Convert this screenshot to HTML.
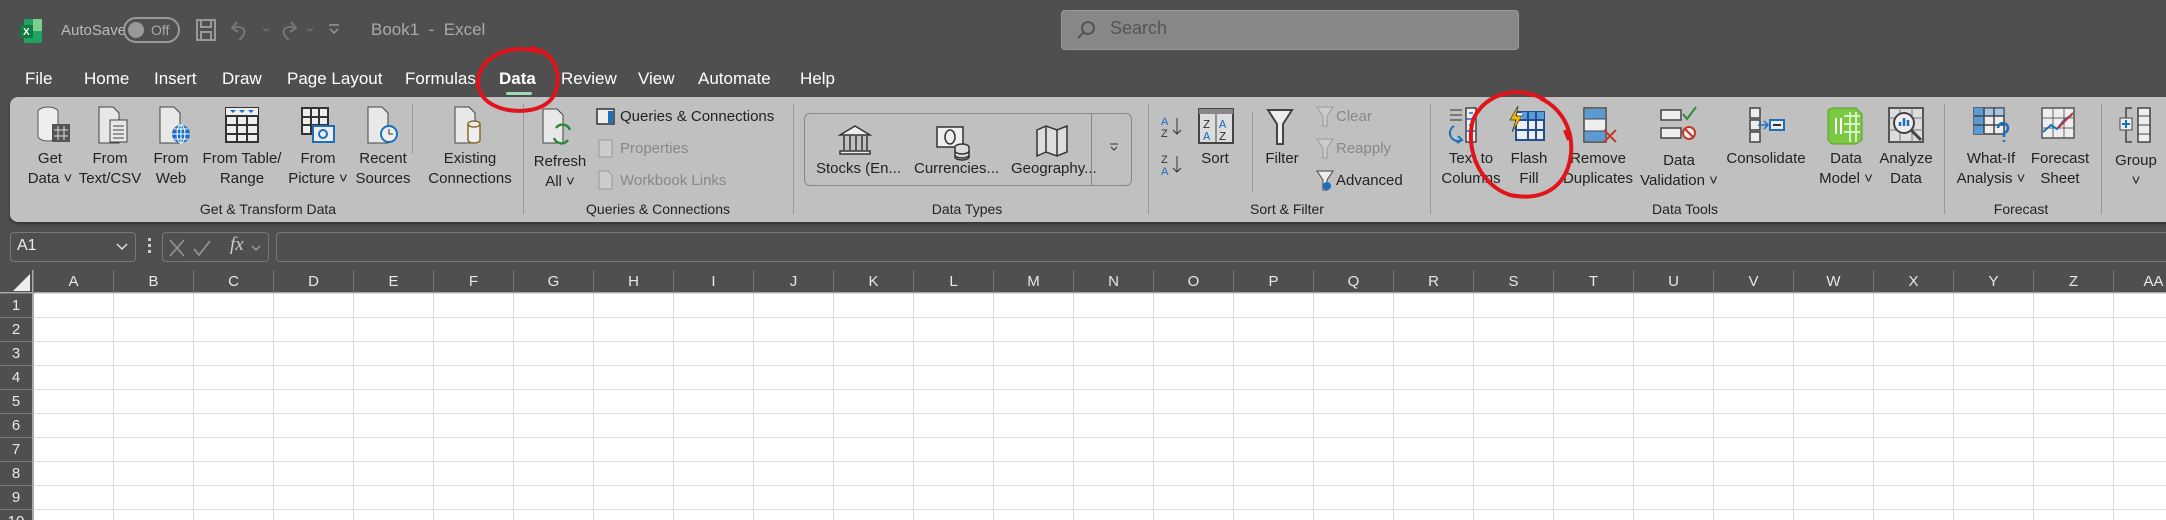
<!DOCTYPE html>
<html><head><meta charset="utf-8"><style>
*{margin:0;padding:0;box-sizing:border-box}
html{width:2166px;height:520px;overflow:hidden;background:#4f4f4f}
body{width:2166px;height:520px;overflow:hidden;background:#4f4f4f;font-family:"Liberation Sans",sans-serif;position:relative}
.a{position:absolute;white-space:nowrap}
.t{color:#fff;font-size:17px;top:69px}
.lb{position:absolute;font-size:15px;color:#222;text-align:center;line-height:20px;transform:translateX(-50%);white-space:nowrap;top:149px}
.gl{position:absolute;font-size:14px;color:#222;top:201px;transform:translateX(-50%);white-space:nowrap}
.sep{position:absolute;top:104px;width:1px;height:110px;background:#999}
.ic{position:absolute;top:106px}
.sm{position:absolute;font-size:15px;color:#222}
.dis{color:#888}
.ch{position:absolute;top:270px;height:23px;color:#e8e8e8;font-size:15px;text-align:center;line-height:23px;border-left:1px solid #777}
.rh{position:absolute;left:0;width:32px;height:24px;color:#e8e8e8;font-size:15px;text-align:center;line-height:24px;border-top:1px solid #777}
#clip{position:absolute;left:0;top:0;width:2166px;height:520px;overflow:hidden}
</style></head><body>
<div id="clip">
<!-- title bar -->
<svg class="a" style="left:20px;top:19px" width="22" height="24"><rect x="4" y="0" width="18" height="24" rx="2" fill="#21a366"/><rect x="13" y="0" width="9" height="12" fill="#7dcf8e"/><rect x="0" y="6" width="13" height="13" rx="1" fill="#107c41"/><text x="3" y="16" font-size="10" fill="#fff" font-family="Liberation Sans" font-weight="bold">X</text></svg>
<div class="a" style="left:61px;top:22px;color:#bbb;font-size:15px">AutoSave</div>
<div class="a" style="left:123px;top:17px;width:57px;height:26px;border:2px solid #999;border-radius:13px"></div>
<div class="a" style="left:128px;top:22px;width:16px;height:16px;border-radius:8px;background:#999"></div>
<div class="a" style="left:151px;top:22px;color:#aaa;font-size:14px">Off</div>
<svg class="a" style="left:195px;top:18px" width="22" height="24" fill="none" stroke="#999" stroke-width="2"><rect x="2" y="2" width="18" height="20"/><rect x="6" y="2" width="10" height="7"/><rect x="6" y="14" width="10" height="8"/></svg>
<svg class="a" style="left:229px;top:18px" width="50" height="24" fill="none" stroke="#777" stroke-width="2"><path d="M8 4 L3 10 L9 14 M3 10 C15 6 20 14 10 22"/><path d="M34 10 l3 3 l3 -3" stroke-width="1"/></svg>
<svg class="a" style="left:275px;top:18px" width="50" height="24" fill="none" stroke="#777" stroke-width="2"><path d="M16 4 L21 10 L15 14 M21 10 C9 6 4 14 14 22"/><path d="M32 10 l3 3 l3 -3" stroke-width="1"/></svg>
<svg class="a" style="left:327px;top:22px" width="14" height="14" fill="none" stroke="#999" stroke-width="1.5"><path d="M2 3 h10 M3 7 l4 4 l4 -4"/></svg>
<div class="a" style="left:371px;top:20px;color:#aaa;font-size:17px">Book1&nbsp; - &nbsp;Excel</div>
<div class="a" style="left:1061px;top:10px;width:458px;height:40px;background:#878787;border-radius:4px;border:1px solid #999"></div>
<svg class="a" style="left:1075px;top:19px" width="22" height="22" fill="none" stroke="#555" stroke-width="2"><circle cx="13" cy="9" r="6"/><path d="M9 13 L3 19"/></svg>
<div class="a" style="left:1110px;top:18px;color:#555;font-size:18px">Search</div>
<!-- tabs -->
<div class="a t" style="left:25px">File</div>
<div class="a t" style="left:84px">Home</div>
<div class="a t" style="left:154px">Insert</div>
<div class="a t" style="left:222px">Draw</div>
<div class="a t" style="left:287px">Page Layout</div>
<div class="a t" style="left:405px">Formulas</div>
<div class="a t" style="left:499px;font-weight:bold">Data</div>
<div class="a" style="left:506px;top:92px;width:26px;height:3px;background:#9fd8b4;border-radius:2px"></div>
<div class="a t" style="left:561px">Review</div>
<div class="a t" style="left:638px">View</div>
<div class="a t" style="left:698px">Automate</div>
<div class="a t" style="left:800px">Help</div>
<!-- ribbon -->
<div class="a" style="left:10px;top:97px;width:2170px;height:125px;background:#c0c0c0;border-radius:8px;box-shadow:0 2px 3px #333"></div>
<svg class="ic" style="left:36px" width="36" height="40"><ellipse cx="12" cy="6" rx="10" ry="5" fill="#eee" stroke="#555"/><path d="M2 6 v24 a10 5 0 0 0 20 0 v-24" fill="#eee" stroke="#555"/><rect x="16" y="18" width="18" height="18" fill="#555"/><path d="M18 24 h14 M18 30 h14 M22 20 v14 M28 20 v14" stroke="#ddd"/></svg>
<svg class="ic" style="left:96px" width="36" height="40" fill="#e8e8e8" stroke="#444"><path d="M3 1 h14 l6 6 v30 h-20z"/><rect x="14" y="14" width="17" height="22"/><path d="M17 20 h11 M17 24 h11 M17 28 h11 M17 32 h11"/></svg>
<svg class="ic" style="left:157px" width="36" height="40"><path d="M3 1 h14 l6 6 v30 h-20z" fill="#e8e8e8" stroke="#444"/><circle cx="24" cy="28" r="9" fill="#1a6fc0"/><path d="M15 28 h18 M24 19 v18 M17 23 h14 M17 33 h14" stroke="#fff"/><ellipse cx="24" cy="28" rx="4" ry="9" fill="none" stroke="#fff"/></svg>
<svg class="ic" style="left:224px" width="36" height="40"><rect x="2" y="2" width="32" height="34" fill="#eee" stroke="#333" stroke-width="2"/><rect x="2" y="2" width="32" height="7" fill="#eee"/><path d="M6 4 l3 3 l3-3z M15 4 l3 3 l3-3z M24 4 l3 3 l3-3z" fill="#1a6fc0"/><path d="M2 10 h32 M2 19 h32 M2 28 h32 M13 10 v26 M23 10 v26" stroke="#333" stroke-width="2"/></svg>
<svg class="ic" style="left:300px" width="36" height="40"><rect x="2" y="2" width="26" height="26" fill="#eee" stroke="#333" stroke-width="2"/><path d="M2 11 h26 M2 19 h26 M11 2 v26 M19 2 v26" stroke="#333" stroke-width="2"/><rect x="13" y="20" width="21" height="16" fill="#eee" stroke="#1a6fc0" stroke-width="2"/><circle cx="23" cy="28" r="4" fill="none" stroke="#1a6fc0" stroke-width="2"/></svg>
<svg class="ic" style="left:365px" width="36" height="40"><path d="M3 1 h14 l6 6 v30 h-20z" fill="#e8e8e8" stroke="#444"/><circle cx="24" cy="28" r="8" fill="#eee" stroke="#1a6fc0" stroke-width="2"/><path d="M24 23 v5 h4" stroke="#333" fill="none"/></svg>
<div class="sep" style="left:412px;height:50px"></div>
<svg class="ic" style="left:452px" width="36" height="40"><path d="M3 1 h14 l6 6 v30 h-20z" fill="#e8e8e8" stroke="#444"/><path d="M16 18 v16 a6 3 0 0 0 12 0 v-16" fill="#eee" stroke="#8a6a2a" stroke-width="1.5"/><ellipse cx="22" cy="18" rx="6" ry="3" fill="#eee" stroke="#8a6a2a" stroke-width="1.5"/></svg>
<div class="lb" style="left:50px">Get<br>Data ˅</div>
<div class="lb" style="left:110px">From<br>Text/CSV</div>
<div class="lb" style="left:171px">From<br>Web</div>
<div class="lb" style="left:242px">From Table/<br>Range</div>
<div class="lb" style="left:318px">From<br>Picture ˅</div>
<div class="lb" style="left:383px">Recent<br>Sources</div>
<div class="lb" style="left:470px">Existing<br>Connections</div>
<div class="gl" style="left:268px">Get &amp; Transform Data</div>
<div class="sep" style="left:523px"></div>
<svg class="ic" style="left:540px;top:108px" width="36" height="44"><path d="M3 1 h14 l6 6 v28 h-20z" fill="#e8e8e8" stroke="#444"/><path d="M30 22 a8 8 0 0 0 -14 -2 M14 30 a8 8 0 0 0 14 2" fill="none" stroke="#2b8a3e" stroke-width="2.5"/></svg>
<div class="lb" style="left:560px;top:152px">Refresh<br>All ˅</div>
<svg class="a" style="left:596px;top:108px" width="20" height="18"><rect x="1" y="1" width="17" height="15" fill="#eee" stroke="#333" stroke-width="1.5"/><rect x="12" y="3" width="5" height="12" fill="#1a6fc0"/></svg>
<div class="sm" style="left:620px;top:108px">Queries &amp; Connections</div>
<svg class="a" style="left:598px;top:139px" width="16" height="20"><rect x="1" y="1" width="13" height="17" fill="#ccc" stroke="#999"/></svg>
<div class="sm dis" style="left:620px;top:140px">Properties</div>
<svg class="a" style="left:598px;top:170px" width="16" height="20"><path d="M1 1 h9 l4 4 v14 h-13z" fill="#ccc" stroke="#999"/></svg>
<div class="sm dis" style="left:620px;top:172px">Workbook Links</div>
<div class="gl" style="left:658px">Queries &amp; Connections</div>
<div class="sep" style="left:793px"></div>
<div class="a" style="left:804px;top:113px;width:328px;height:73px;border:1px solid #888;border-radius:6px"></div>
<div class="a" style="left:1091px;top:113px;width:1px;height:73px;background:#888"></div>
<svg class="a" style="left:1108px;top:142px" width="12" height="12" fill="none" stroke="#333"><path d="M2 2 h8 M3 5 l3 3 l3 -3"/></svg>
<svg class="a" style="left:838px;top:124px" width="34" height="32" fill="#eee" stroke="#333" stroke-width="1.5"><path d="M2 11 L17 2 L32 11z"/><path d="M6 12 v14 M12 12 v14 M18 12 v14 M24 12 v14 M29 12 v14"/><rect x="2" y="27" width="30" height="3"/></svg>
<svg class="a" style="left:935px;top:125px" width="36" height="36" stroke="#333" stroke-width="1.5"><rect x="2" y="2" width="26" height="20" fill="#eee"/><ellipse cx="15" cy="12" rx="5" ry="7" fill="none"/><ellipse cx="27" cy="22" rx="7" ry="3" fill="#ddd"/><path d="M20 22 v10 a7 3 0 0 0 14 0 v-10" fill="#ddd"/><path d="M20 26 a7 3 0 0 0 14 0 M20 30 a7 3 0 0 0 14 0" fill="none"/></svg>
<svg class="a" style="left:1035px;top:124px" width="34" height="36" fill="#ddd" stroke="#333" stroke-width="1.5"><path d="M2 6 L11 2 L22 6 L32 2 V28 L22 32 L11 28 L2 32Z"/><path d="M11 2 v26 M22 6 v26"/></svg>
<div class="sm" style="left:816px;top:160px">Stocks (En...</div>
<div class="sm" style="left:914px;top:160px">Currencies...</div>
<div class="sm" style="left:1011px;top:160px">Geography...</div>
<div class="gl" style="left:967px">Data Types</div>
<div class="sep" style="left:1148px"></div>
<svg class="a" style="left:1160px;top:114px" width="26" height="26"><text x="1" y="11" font-size="11" fill="#1a6fc0" font-family="Liberation Sans">A</text><text x="1" y="23" font-size="11" fill="#333" font-family="Liberation Sans">Z</text><path d="M17 4 v16 M13 16 l4 4 l4 -4" stroke="#333" fill="none"/></svg>
<svg class="a" style="left:1160px;top:152px" width="26" height="26"><text x="1" y="11" font-size="11" fill="#333" font-family="Liberation Sans">Z</text><text x="1" y="23" font-size="11" fill="#1a6fc0" font-family="Liberation Sans">A</text><path d="M17 4 v16 M13 16 l4 4 l4 -4" stroke="#333" fill="none"/></svg>
<svg class="a" style="left:1198px;top:108px" width="36" height="36"><rect x="1" y="1" width="34" height="34" fill="#ddd" stroke="#444" stroke-width="2"/><rect x="1" y="1" width="34" height="5" fill="#888"/><path d="M18 6 v29" stroke="#444"/><text x="5" y="20" font-size="12" fill="#333" font-family="Liberation Mono">Z</text><text x="5" y="32" font-size="12" fill="#1a6fc0" font-family="Liberation Mono">A</text><text x="21" y="20" font-size="12" fill="#1a6fc0" font-family="Liberation Mono">A</text><text x="21" y="32" font-size="12" fill="#333" font-family="Liberation Mono">Z</text></svg>
<div class="lb" style="left:1215px">Sort</div>
<div class="sep" style="left:1252px;top:112px;height:80px"></div>
<svg class="a" style="left:1266px;top:108px" width="30" height="40"><path d="M2 2 h24 l-9 14 v20 h-6 v-20z" fill="#eee" stroke="#444" stroke-width="2"/></svg>
<div class="lb" style="left:1282px">Filter</div>
<svg class="a" style="left:1316px;top:106px" width="20" height="22"><path d="M1 1 h16 l-6 9 v10 h-4 v-10z" fill="#ccc" stroke="#999"/></svg>
<div class="sm dis" style="left:1336px;top:108px">Clear</div>
<svg class="a" style="left:1316px;top:138px" width="20" height="22"><path d="M1 1 h16 l-6 9 v10 h-4 v-10z" fill="#ccc" stroke="#999"/></svg>
<div class="sm dis" style="left:1336px;top:140px">Reapply</div>
<svg class="a" style="left:1316px;top:170px" width="20" height="22"><path d="M1 1 h16 l-6 9 v10 h-4 v-10z" fill="#eee" stroke="#444"/><circle cx="11" cy="16" r="4" fill="#1a6fc0"/></svg>
<div class="sm" style="left:1336px;top:172px">Advanced</div>
<div class="gl" style="left:1287px">Sort &amp; Filter</div>
<div class="sep" style="left:1430px"></div>
<svg class="ic" style="left:1448px" width="40" height="40"><path d="M2 4 h12 M2 9 h12 M2 14 h12" stroke="#777" stroke-width="2"/><path d="M6 20 a7 7 0 0 0 8 14 M10 30 l4 4 l-5 3" fill="none" stroke="#1a6fc0" stroke-width="2"/><rect x="18" y="2" width="10" height="34" fill="#eee" stroke="#444" stroke-width="1.5"/><path d="M18 13 h10 M18 25 h10 M21 7 h4 M21 19 h4 M21 31 h4" stroke="#1a6fc0" stroke-width="1.5"/></svg>
<svg class="ic" style="left:1508px" width="40" height="40"><rect x="8" y="6" width="28" height="28" fill="#eee" stroke="#1f4e9a" stroke-width="2"/><rect x="14" y="6" width="22" height="8" fill="#5b9bd5"/><path d="M8 14 h28 M8 24 h28 M20 6 v28 M28 6 v28" stroke="#1f4e9a" stroke-width="2"/><path d="M10 0 L2 14 h6 l-4 12 l10 -16 h-6z" fill="#f5b800" stroke="#333" stroke-width="0.7"/></svg>
<svg class="ic" style="left:1582px" width="40" height="40"><rect x="2" y="2" width="22" height="34" fill="#eee" stroke="#444" stroke-width="1.5"/><rect x="3" y="3" width="20" height="10" fill="#5b9bd5"/><rect x="3" y="25" width="20" height="10" fill="#5b9bd5"/><path d="M2 13 h22 M2 25 h22" stroke="#444"/><path d="M22 24 l12 12 M34 24 l-12 12" stroke="#c0392b" stroke-width="2"/></svg>
<svg class="ic" style="left:1659px" width="40" height="40"><rect x="2" y="4" width="20" height="10" fill="#eee" stroke="#444" stroke-width="1.5"/><path d="M24 8 l4 5 l9 -12" fill="none" stroke="#2b8a3e" stroke-width="2"/><rect x="2" y="22" width="20" height="10" fill="#eee" stroke="#444" stroke-width="1.5"/><circle cx="30" cy="27" r="6" fill="#eee" stroke="#c0392b" stroke-width="2"/><path d="M26 23 l8 8" stroke="#c0392b" stroke-width="2"/></svg>
<svg class="ic" style="left:1748px" width="40" height="40"><rect x="2" y="2" width="10" height="10" fill="#eee" stroke="#444" stroke-width="1.5"/><rect x="2" y="14" width="10" height="10" fill="#eee" stroke="#444" stroke-width="1.5"/><rect x="2" y="26" width="10" height="10" fill="#eee" stroke="#444" stroke-width="1.5"/><path d="M10 19 h10 M16 15 l4 4 l-4 4" stroke="#1a6fc0" fill="none" stroke-width="1.5"/><rect x="22" y="14" width="14" height="10" fill="#eee" stroke="#1a6fc0" stroke-width="2"/><path d="M25 19 h8" stroke="#333" stroke-width="2"/></svg>
<svg class="ic" style="left:1826px" width="40" height="40"><path d="M6 2 h24 l6 6 v26 l-6 4 h-24 l-4 -4 v-30z" fill="#7ac943" stroke="#5aa02c"/><path d="M18 10 h16 M18 18 h16 M18 26 h16 M24 6 v30 M30 6 v30" stroke="#d8f0c8" stroke-width="2"/><path d="M10 12 v16 M15 12 v16" stroke="#fff" stroke-width="2"/></svg>
<svg class="ic" style="left:1887px" width="40" height="40"><rect x="2" y="2" width="34" height="34" fill="#ddd" stroke="#555" stroke-width="2"/><path d="M2 12 h34 M2 24 h34 M13 2 v34 M25 2 v34" stroke="#777"/><circle cx="17" cy="17" r="10" fill="#eee" stroke="#444" stroke-width="2"/><path d="M24 24 l10 10" stroke="#444" stroke-width="3"/><path d="M13 20 v-4 M17 20 v-8 M21 20 v-6" stroke="#1a6fc0" stroke-width="2.5"/></svg>
<div class="lb" style="left:1471px">Text to<br>Columns</div>
<div class="lb" style="left:1529px">Flash<br>Fill</div>
<div class="lb" style="left:1598px">Remove<br>Duplicates</div>
<div class="lb" style="left:1679px;top:151px">Data<br>Validation ˅</div>
<div class="lb" style="left:1766px">Consolidate</div>
<div class="lb" style="left:1846px">Data<br>Model ˅</div>
<div class="lb" style="left:1906px">Analyze<br>Data</div>
<div class="gl" style="left:1685px">Data Tools</div>
<div class="sep" style="left:1944px"></div>
<svg class="ic" style="left:1972px" width="40" height="40"><rect x="2" y="2" width="30" height="26" fill="#eee" stroke="#444" stroke-width="1.5"/><rect x="2" y="2" width="10" height="26" fill="#5b9bd5"/><rect x="2" y="2" width="30" height="8" fill="#5b9bd5" opacity=".5"/><path d="M2 10 h30 M2 19 h30 M12 2 v26 M22 2 v26" stroke="#444" stroke-width="1.5"/><path d="M26 22 a5 5 0 1 1 6 5 v4 M32 34 v2" fill="none" stroke="#1a6fc0" stroke-width="2.5"/></svg>
<svg class="ic" style="left:2040px" width="40" height="40"><rect x="2" y="2" width="32" height="30" fill="#eee" stroke="#555" stroke-width="1.5"/><path d="M2 12 h32 M2 22 h32 M13 2 v30 M24 2 v30" stroke="#666"/><path d="M3 26 l8 -7 l6 4 l8 -10 l7 -4" fill="none" stroke="#1a6fc0" stroke-width="2"/><path d="M18 22 l8 -8 l7 -7" fill="none" stroke="#c0392b" stroke-width="2"/></svg>
<div class="lb" style="left:1991px">What-If<br>Analysis ˅</div>
<div class="lb" style="left:2060px">Forecast<br>Sheet</div>
<div class="gl" style="left:2021px">Forecast</div>
<div class="sep" style="left:2101px"></div>
<svg class="ic" style="left:2118px" width="40" height="40"><path d="M14 2 h-6 v34 h6" fill="none" stroke="#444" stroke-width="1.5"/><rect x="2" y="12" width="12" height="12" fill="#eee" stroke="#444"/><path d="M8 14 v8 M4 18 h8" stroke="#1a6fc0" stroke-width="2"/><rect x="20" y="2" width="12" height="34" fill="#eee" stroke="#444" stroke-width="1.5"/><path d="M20 10 h12 M20 19 h12 M20 28 h12" stroke="#444"/></svg>
<div class="lb" style="left:2136px;top:151px">Group<br>˅</div>
<!-- formula bar -->
<div class="a" style="left:10px;top:232px;width:126px;height:30px;border:1px solid #777;border-radius:4px"></div>
<div class="a" style="left:17px;top:237px;color:#eee;font-size:16px">A1</div>
<svg class="a" style="left:115px;top:242px" width="14" height="10" fill="none" stroke="#ddd" stroke-width="1.5"><path d="M2 2 l5 5 l5 -5"/></svg>
<div class="a" style="left:148px;top:238px;width:3px;height:3px;background:#ccc;box-shadow:0 6px #ccc,0 12px #ccc"></div>
<div class="a" style="left:162px;top:232px;width:107px;height:30px;border:1px solid #777;border-radius:4px"></div>
<svg class="a" style="left:168px;top:238px" width="100" height="20" fill="none" stroke="#999" stroke-width="1.5"><path d="M2 2 l14 16 M16 2 l-14 16"/><path d="M26 11 l5 6 l11 -14"/><path d="M84 8 l4 4 l4 -4"/></svg>
<div class="a" style="left:230px;top:234px;color:#ccc;font-size:19px;font-family:'Liberation Serif',serif;font-style:italic">fx</div>
<div class="a" style="left:276px;top:232px;width:1900px;height:30px;border:1px solid #777;border-radius:4px"></div>
<!-- grid -->
<div class="a" style="left:0;top:293px;width:2166px;height:227px;background:#fff;background-image:linear-gradient(#dcdcdc 1px,transparent 1px),linear-gradient(90deg,#dcdcdc 1px,transparent 1px);background-size:80px 24px;background-position:33px 0"></div>
<div class="a" style="left:0;top:293px;width:33px;height:227px;background:#4f4f4f"></div>
<div class="a" style="left:32px;top:270px;width:2px;height:250px;background:#aaa"></div>
<div class="a" style="left:0;top:292px;width:2166px;height:1px;background:#aaa"></div>
<svg class="a" style="left:10px;top:272px" width="22" height="20"><path d="M20 2 V19 H3 Z" fill="#eee"/></svg>
<div id="cols"></div><div id="rows"></div>
<svg class="a" style="left:0;top:0" width="2166" height="520" fill="none" stroke="#e0141b" stroke-width="4">
<path d="M540 52 C505 42 478 60 478 82 C478 104 505 114 530 110 C552 106 560 92 557 72 C554 58 545 50 530 48"/>
<path d="M1545 100 C1520 85 1485 92 1473 120 C1465 150 1480 185 1510 195 C1545 202 1565 185 1570 160 C1575 135 1565 110 1540 98 M1565 130 l4 10"/>
</svg>
</div>
<script>
var c='',L='ABCDEFGHIJKLMNOPQRSTUVWXYZ';L=L.split('');L.push('AA');
for(var i=0;i<L.length;i++)c+='<div class="ch" style="left:'+(33+i*80)+'px;width:80px">'+L[i]+'</div>';
document.getElementById('cols').innerHTML=c;
var r='';for(var j=1;j<=10;j++)r+='<div class="rh" style="top:'+(293+(j-1)*24)+'px">'+j+'</div>';
document.getElementById('rows').innerHTML=r;
</script>
</body></html>
